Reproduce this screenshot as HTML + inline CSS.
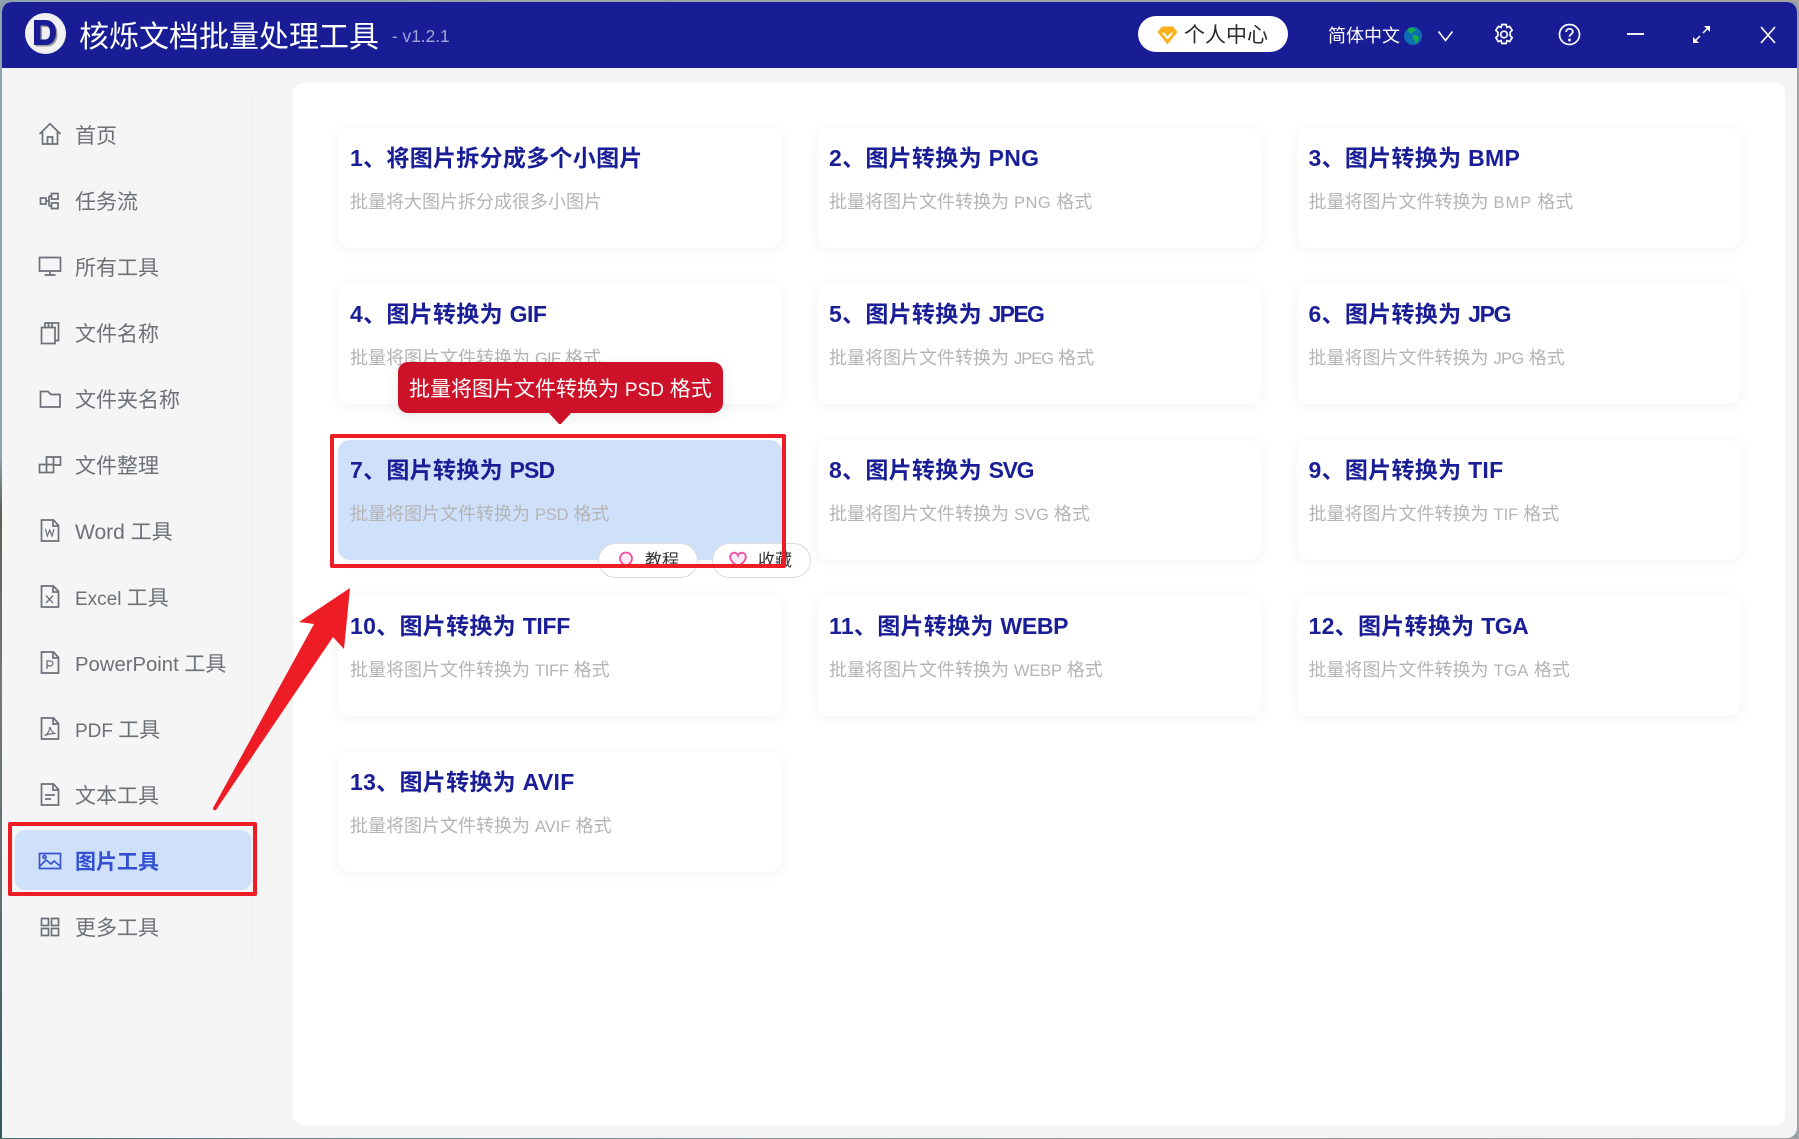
<!DOCTYPE html>
<html lang="zh"><head><meta charset="utf-8"><title>核烁文档批量处理工具</title>
<style>
*{box-sizing:border-box;margin:0;padding:0}
html,body{width:1799px;height:1139px;overflow:hidden;background:#8d9ea6;font-family:"Liberation Sans","Noto Sans CJK SC",sans-serif}
.abs,.t,.card,.nav,.ic{position:absolute}
.strip{position:absolute;left:0;top:0;width:2px;height:1139px;background:linear-gradient(#8fa3ad 0,#8fa3ad 40%,#5a6057 45%,#777 60%,#5d6e72 80%,#2f5a5c 100%)}
#top{position:absolute;left:0;top:0;width:1799px;height:2px;background:linear-gradient(90deg,#8fa3ad,#9da4a8 50%,#a3a3a3)}
#bot{position:absolute;left:0;top:1138px;width:1799px;height:1px;background:linear-gradient(90deg,#3f7376,#6d8e8e 20%,#999 60%,#a3a3a3)}
#right{position:absolute;left:1797px;top:0;width:2px;height:1139px;background:#a3a3a3}
#win{position:absolute;left:2px;top:2px;width:1795px;height:1136px;background:#f4f4f4;border-radius:10px;overflow:hidden}
#hdr{position:absolute;left:2px;top:2px;width:1795px;height:66px;background:#181d96;border-radius:10px 10px 0 0}
#side{position:absolute;left:2px;top:68px;width:250px;height:1070px;background:#f5f5f5}
#div{position:absolute;left:251px;top:98px;width:1px;height:860px;background:#eeeeee}
#panel{position:absolute;left:293px;top:83px;width:1492px;height:1042px;background:#fff;border-radius:10px}
.card{width:443.500px;height:120px;background:#fff;border-radius:12px;box-shadow:0 2px 14px rgba(0,0,0,.055)}
.card b{position:absolute;left:12px;top:14px;font-size:23px;letter-spacing:.3px;line-height:32px;color:#1a1e96;font-weight:700;white-space:nowrap}
.card b i{font-style:normal}
.card span{position:absolute;left:12px;top:61px;font-size:18px;line-height:26px;color:#b4b4b4;white-space:nowrap}
.card span i{font-style:normal;font-size:16.500px}
.nav{left:75px;height:30px;line-height:30px;font-size:21px;color:#6c7077;white-space:nowrap}
.nav i{font-style:normal}
.ic{left:38px;width:24px;height:24px;fill:none;stroke:#6c7077;stroke-width:1.7}
.t{white-space:nowrap}
</style></head>
<body>
<div id="top"></div><div class="strip"></div><div id="right"></div><div id="bot"></div>
<div id="win"></div><div id="hdr"></div><div id="side"></div><div id="div"></div><div id="panel"></div>

<!-- header -->
<svg class="abs" style="left:25px;top:13px" width="41" height="41" viewBox="0 0 41 41">
<circle cx="20.5" cy="20.5" r="20.5" fill="#f0f0f0"/>
<path fill-rule="evenodd" d="M9 7h11.500C28 7 31 13 31 19.500s-3 12.500-10.500 12.500H9zM15.500 12.500v14h4.500c3.500 0 5-3 5-7s-1.500-7-5-7z" fill="#9a9a9a" transform="translate(1.500 1.500)"/>
<path fill-rule="evenodd" d="M9 7h11.500C28 7 31 13 31 19.500s-3 12.500-10.500 12.500H9zM15.500 12.500v14h4.500c3.500 0 5-3 5-7s-1.500-7-5-7z" fill="#181d96"/>
</svg>
<div class="t" style="left:79px;top:16px;position:absolute;font-size:30px;line-height:44px;color:#fff">核烁文档批量处理工具</div>
<div class="t" style="left:392px;top:23px;position:absolute;font-size:17.300px;line-height:26px;color:#a3a6d6">- v1.2.1</div>

<div class="abs" style="left:1138px;top:16px;width:150px;height:36px;border-radius:18px;background:#fff"></div>
<svg class="abs" style="left:1157px;top:26px" width="21" height="19" viewBox="0 0 21 19">
<path d="M5 .5h11l4.500 5.500L10.500 18.500.5 6z" fill="#fbb01e"/>
<path d="M6 7l4.500 5L15 7" fill="none" stroke="#fff" stroke-width="2.200"/>
</svg>
<div class="t" style="position:absolute;left:1184px;top:21px;font-size:21px;line-height:30px;color:#2b2b2b">个人中心</div>
<div class="t" style="position:absolute;left:1328px;top:23px;font-size:18px;line-height:27px;color:#fff">简体中文</div>
<svg class="abs" style="left:1404px;top:27px" width="18" height="18" viewBox="0 0 18 18">
<circle cx="9" cy="9" r="9" fill="#0e6db0"/>
<path d="M4 1.500l4-1 2 1.500 2-.5-1 2.500-2 .5-1 2-2-.5-1.500-2zM9 8l4 .5 2 2.500-1.500 4-2.500 1.500-.5-3.500-2-2z" fill="#17b04c"/>
</svg>
<svg class="abs" style="left:1437px;top:30px;fill:none;stroke:#fff;stroke-width:1.600" width="17" height="12" viewBox="0 0 17 12"><path d="M1.500 1.500l7 9 7-9"/></svg>
<svg class="abs" style="left:1492.500px;top:23px;fill:none;stroke:#fff;stroke-width:1.700" width="22" height="23" viewBox="0 0 22 23">
<path d="M8.800 1.500h4.400l.7 3 2.700-1.100 2.600 3.900-2.100 2.100v3.200l2.100 2.100-2.600 3.900-2.700-1.100-.7 3H8.800l-.7-3-2.700 1.100-2.600-3.900 2.100-2.100V9.400L2.800 7.300l2.600-3.900 2.700 1.100z" stroke-linejoin="round"/>
<circle cx="11" cy="11.500" r="3.300"/></svg>
<svg class="abs" style="left:1558px;top:23px;fill:none;stroke:#fff;stroke-width:1.700" width="23" height="23" viewBox="0 0 23 23">
<circle cx="11.500" cy="11.500" r="10"/>
<path d="M8.200 9c0-2 1.500-3.200 3.300-3.200s3.300 1.200 3.300 3c0 2.300-3.300 2.400-3.300 5"/><circle cx="11.500" cy="17" r=".6" fill="#fff"/></svg>
<div class="abs" style="left:1627px;top:33px;width:17px;height:2px;background:#eef"></div>
<svg class="abs" style="left:1692px;top:25px;fill:none;stroke:#fff;stroke-width:1.500" width="19" height="19" viewBox="0 0 19 19">
<path d="M11 8l6-6M2 17l6-6"/><path d="M12 1h6v6z" fill="#fff" stroke="none"/><path d="M1 12v6h6z" fill="#fff" stroke="none"/></svg>
<svg class="abs" style="left:1759px;top:26px;fill:none;stroke:#fff;stroke-width:1.600" width="18" height="18" viewBox="0 0 18 18"><path d="M2 1l14 16M16 1L2 17"/></svg>

<!-- sidebar -->
<div class="abs" style="left:15px;top:830px;width:236px;height:60px;background:#cfe0fb;border-radius:10px"></div>

<svg class="ic" style="top:122px" viewBox="0 0 24 24"><path d="M1.500 12L12 1.800 22.500 12M4.500 9.500V22h15V9.500M9.500 22v-7h5v7"/></svg>
<div class="nav" style="top:122px">首页</div>
<svg class="ic" style="top:189px;left:37px" viewBox="0 0 24 24"><path d="M3.500 9h5.500v6H3.500zM14.500 4.500H21v5.500h-6.500zM14.500 14H21v5.500h-6.500zM9 12h3M12 7v10M12 7h2.500M12 17h2.500"/></svg>
<div class="nav" style="top:188px">任务流</div>
<svg class="ic" style="top:254px" viewBox="0 0 24 24"><path d="M1.500 3.500h21V17h-21zM12 17v4M6.500 21h11"/></svg>
<div class="nav" style="top:254px">所有工具</div>
<svg class="ic" style="top:321px" viewBox="0 0 24 24"><path d="M3.500 6.500h13.500v16H3.500zM7 6.500V2h13.500v17.500H17M10.500 2v4.500M14 2v4.500"/></svg>
<div class="nav" style="top:320px">文件名称</div>
<svg class="ic" style="top:388px" viewBox="0 0 24 24"><path d="M2.500 3.500h7.500l3 3h9v12.500H2.500z"/></svg>
<div class="nav" style="top:386px">文件夹名称</div>
<svg class="ic" style="top:453px" viewBox="0 0 24 24"><path d="M1.500 11.500h7v8h-7zM8.500 11.500h7v8h-7zM8.500 11.500V4h14v8h-7M15.500 4v7.500"/></svg>
<div class="nav" style="top:452px">文件整理</div>
<svg class="ic" style="top:518px" viewBox="0 0 24 24"><path d="M3.500 2h12l5 5.500V23h-17zM15 2v6h5.500"/><path d="M7.500 11l1.800 7 2.400-6 2.400 6 1.800-7" stroke-width="1.200"/></svg>
<div class="nav" style="top:518px">Word 工具</div>
<svg class="ic" style="top:584px" viewBox="0 0 24 24"><path d="M3.500 2h12l5 5.500V23h-17zM15 2v6h5.500"/><path d="M8 11.500l7 7.500M15 11.500l-7 7.500" stroke-width="1.300"/></svg>
<div class="nav" style="top:584px"><i style="font-size:19px">Excel </i>工具</div>
<svg class="ic" style="top:650px" viewBox="0 0 24 24"><path d="M3.500 2h12l5 5.500V23h-17zM15 2v6h5.500"/><path d="M9 19v-8h3.500a2.300 2.300 0 0 1 0 4.800H9" stroke-width="1.300"/></svg>
<div class="nav" style="top:650px"><i style="font-size:20.300px">PowerPoint </i>工具</div>
<svg class="ic" style="top:716px" viewBox="0 0 24 24"><path d="M3.500 2h12l5 5.500V23h-17zM15 2v6h5.500"/><path d="M6.500 19.500c3-1 5-4.500 5.500-8.500 1 3.500 2.500 6 5.500 6.500-3 0-7 .5-11 2z" stroke-width="1.200"/></svg>
<div class="nav" style="top:716px"><i style="font-size:19px">PDF </i>工具</div>
<svg class="ic" style="top:782px" viewBox="0 0 24 24"><path d="M3.500 2h12l5 5.500V23h-17zM15 2v6h5.500M7 13h10M7 17h6"/></svg>
<div class="nav" style="top:782px">文本工具</div>
<svg class="ic" style="top:849px;stroke:#3a55d2" viewBox="0 0 24 24"><path d="M1.500 4.500h21v15h-21zM2 17l6-6 5 4 3-3 6 5"/><circle cx="6.500" cy="8" r="1.500"/></svg>
<div class="nav" style="top:848px;color:#3350d2;font-weight:700">图片工具</div>
<svg class="ic" style="top:915px" viewBox="0 0 24 24"><path d="M3.500 3.500h7v7h-7zM13.500 3.500h7v7h-7zM3.500 13.500h7v7h-7zM13.500 13.500h7v7h-7z"/></svg>
<div class="nav" style="top:914px">更多工具</div>

<!-- cards -->
<div class="card" style="left:338px;top:128px"><b>1、将图片拆分成多个小图片</b><span>批量将大图片拆分成很多小图片</span></div>
<div class="card" style="left:817px;top:128px"><b>2、图片转换为 PNG</b><span>批量将图片文件转换为 <i style="letter-spacing:.5px">PNG</i> 格式</span></div>
<div class="card" style="left:1296.500px;top:128px"><b>3、图片转换为 BMP</b><span>批量将图片文件转换为 <i style="letter-spacing:1px">BMP</i> 格式</span></div>
<div class="card" style="left:338px;top:284px"><b>4、图片转换为 <i style="letter-spacing:-.5px">GIF</i></b><span>批量将图片文件转换为 <i style="letter-spacing:-.8px">GIF</i> 格式</span></div>
<div class="card" style="left:817px;top:284px"><b>5、图片转换为 <i style="letter-spacing:-1.700px">JPEG</i></b><span>批量将图片文件转换为 <i style="letter-spacing:-1px">JPEG</i> 格式</span></div>
<div class="card" style="left:1296.500px;top:284px"><b>6、图片转换为 <i style="letter-spacing:-1.300px">JPG</i></b><span>批量将图片文件转换为 <i style="letter-spacing:-.6px">JPG</i> 格式</span></div>
<div class="card" style="left:338px;top:440px;background:#cfe0fb"><b>7、图片转换为 <i style="letter-spacing:-.9px">PSD</i></b><span>批量将图片文件转换为 <i style="letter-spacing:-.2px">PSD</i> 格式</span></div>
<div class="card" style="left:817px;top:440px"><b>8、图片转换为 <i style="letter-spacing:-1.300px">SVG</i></b><span>批量将图片文件转换为 <i>SVG</i> 格式</span></div>
<div class="card" style="left:1296.500px;top:440px"><b>9、图片转换为 TIF</b><span>批量将图片文件转换为 <i>TIF</i> 格式</span></div>
<div class="card" style="left:338px;top:596px"><b>10、图片转换为 <i style="letter-spacing:-.3px">TIFF</i></b><span>批量将图片文件转换为 <i style="letter-spacing:-.3px">TIFF</i> 格式</span></div>
<div class="card" style="left:817px;top:596px"><b>11、图片转换为 <i style="letter-spacing:-.3px">WEBP</i></b><span>批量将图片文件转换为 <i style="letter-spacing:-.2px">WEBP</i> 格式</span></div>
<div class="card" style="left:1296.500px;top:596px"><b>12、图片转换为 <i style="letter-spacing:-.5px">TGA</i></b><span>批量将图片文件转换为 <i style="letter-spacing:.5px">TGA</i> 格式</span></div>
<div class="card" style="left:338px;top:752px"><b>13、图片转换为 AVIF</b><span>批量将图片文件转换为 <i>AVIF</i> 格式</span></div>

<!-- hover buttons -->
<div class="abs" style="left:598px;top:543px;width:100px;height:35px;background:#fff;border:1px solid #dcdcdc;border-radius:18px"></div>
<svg class="abs" style="left:618px;top:550px;fill:#fdeef6;stroke:#ef4fa6;stroke-width:1.800" width="16" height="20" viewBox="0 0 16 20"><path d="M5 17v-3C3 12.500 2 11 2 8.500a6 6 0 0 1 12 0c0 2.500-1 4-3 5.500v3"/></svg>
<div class="t" style="position:absolute;left:645px;top:548px;font-size:17px;line-height:26px;color:#333">教程</div>
<div class="abs" style="left:712px;top:543px;width:99px;height:35px;background:#fff;border:1px solid #dcdcdc;border-radius:18px"></div>
<svg class="abs" style="left:729px;top:551px;fill:#fdeef6;stroke:#ef4fa6;stroke-width:1.800" width="18" height="17" viewBox="0 0 18 17"><path d="M9 15.500C4 12 1.200 9.500 1.200 6A4 4 0 0 1 9 4.500 4 4 0 0 1 16.800 6C16.800 9.500 14 12 9 15.500z"/></svg>
<div class="t" style="position:absolute;left:758px;top:548px;font-size:17px;line-height:26px;color:#333">收藏</div>

<!-- tooltip -->
<div class="abs" style="left:398px;top:362px;width:325px;height:51px;background:#cc1129;border-radius:10px;box-shadow:0 4px 16px rgba(0,0,0,.08)"></div>
<svg class="abs" style="left:548px;top:412px" width="24" height="13" viewBox="0 0 24 13"><path d="M0 0h24L13 12h-2z" fill="#cc1129"/></svg>
<div class="t" style="position:absolute;left:409px;top:375px;font-size:21px;line-height:30px;color:#fff">批量将图片文件转换为 <span style="font-size:19px">PSD</span> 格式</div>

<!-- annotations -->
<div class="abs" style="left:8px;top:822px;width:249px;height:74px;border:4px solid #ee1c25;border-radius:2px"></div>
<div class="abs" style="left:330px;top:434px;width:456px;height:134px;border:4px solid #ee1c25;border-radius:2px"></div>
<svg class="abs" style="left:200px;top:570px" width="170" height="250" viewBox="200 570 170 250">
<path d="M350 588L299 622 314 624 213 808A2 2 0 0 0 216 810L333 637 344 649z" fill="#ee1c25"/></svg>
</body></html>
